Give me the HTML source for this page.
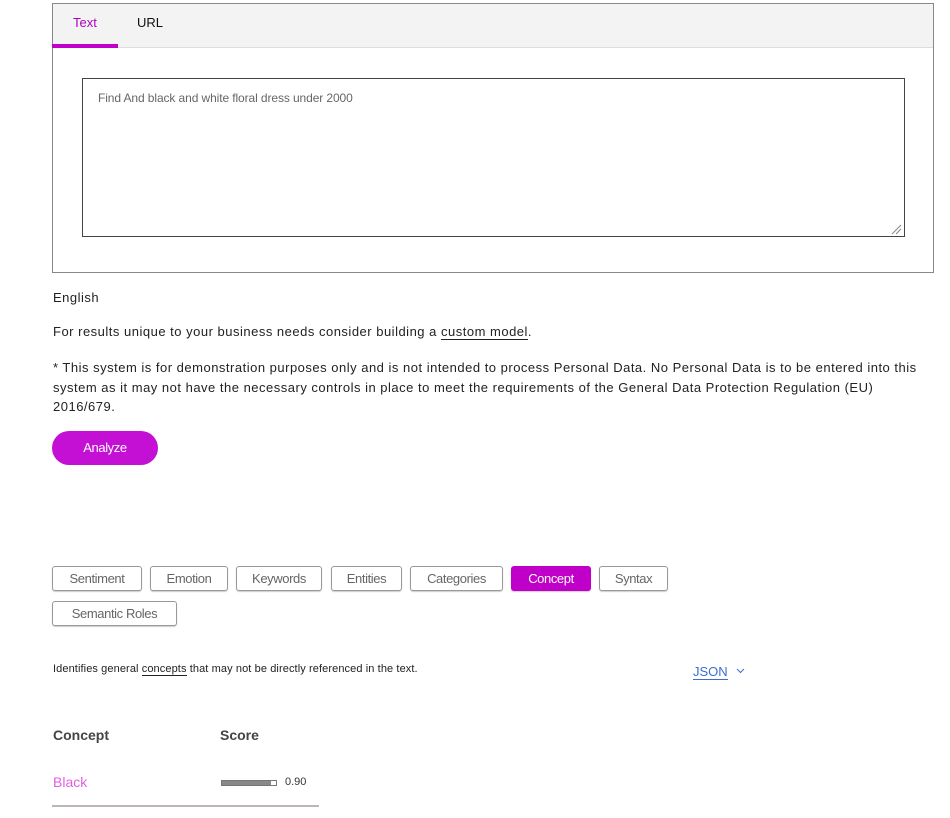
<!DOCTYPE html>
<html><head><style>
*{margin:0;padding:0;box-sizing:border-box}
body{width:950px;height:818px;background:#fff;font-family:"Liberation Sans",sans-serif;color:#222;position:relative;overflow:hidden}
.a{position:absolute;white-space:nowrap}
.btn{position:absolute;top:566px;height:25px;border:1px solid #999;border-radius:3px;font-size:13px;color:#666;text-align:center;line-height:23px;box-shadow:0 1px 1px #ccc;letter-spacing:-0.4px}
.t{letter-spacing:0.5px}
</style></head><body>
<div class="a" style="left:52px;top:3px;width:882px;height:270px;border:1px solid #888"></div>
<div class="a" style="left:53px;top:4px;width:880px;height:44px;background:#f3f3f3;border-bottom:1px solid #ddd"></div>
<div class="a" style="left:52px;top:44px;width:66px;height:4px;background:#c000c8"></div>
<div class="a" style="left:73px;top:15px;font-size:13px;color:#b000c0">Text</div>
<div class="a" style="left:137px;top:15px;font-size:13px;color:#111">URL</div>
<div class="a" style="left:82px;top:78px;width:823px;height:159px;border:1px solid #444"></div>
<div class="a" style="left:98px;top:91px;font-size:12px;color:#666;letter-spacing:-0.1px">Find And black and white floral dress under 2000</div>
<svg class="a" style="left:890px;top:223px" width="12" height="12"><path d="M2 11L11 2M6 11L11 6" stroke="#888" stroke-width="1"/></svg>
<div class="a t" style="left:53px;top:290px;font-size:13px">English</div>
<div class="a t" style="left:53px;top:324px;font-size:13px">For results unique to your business needs consider building a <span style="border-bottom:1px solid #222">custom model</span>.</div>
<div class="a t" style="left:53px;top:358px;font-size:13px;line-height:19.5px">* This system is for demonstration purposes only and is not intended to process Personal Data. No Personal Data is to be entered into this<br>system as it may not have the necessary controls in place to meet the requirements of the General Data Protection Regulation (EU)<br>2016/679.</div>
<div class="a" style="left:52px;top:431px;width:106px;height:34px;border-radius:17px;background:#c410d4;color:#fff;font-size:13px;text-align:center;line-height:34px;letter-spacing:-0.4px">Analyze</div>
<div class="btn" style="left:52px;width:90px">Sentiment</div>
<div class="btn" style="left:150px;width:78px">Emotion</div>
<div class="btn" style="left:236px;width:86px">Keywords</div>
<div class="btn" style="left:331px;width:71px">Entities</div>
<div class="btn" style="left:410px;width:93px">Categories</div>
<div class="btn" style="left:511px;width:80px;background:#c000c8;border-color:#c000c8;color:#fff">Concept</div>
<div class="btn" style="left:599px;width:69px">Syntax</div>
<div class="btn" style="left:52px;top:601px;width:125px">Semantic Roles</div>
<div class="a" style="left:53px;top:663px;font-size:11px;color:#222;letter-spacing:0.1px">Identifies general <span style="border-bottom:1px solid #222">concepts</span> that may not be directly referenced in the text.</div>
<div class="a" style="left:693px;top:664px;font-size:13px;color:#3a6fd0;border-bottom:1px solid #3a6fd0;line-height:15px">JSON</div>
<svg class="a" style="left:736px;top:668px" width="9" height="6"><path d="M1 1L4.5 4.5L8 1" stroke="#3a6fd0" fill="none"/></svg>
<div class="a" style="left:53px;top:727px;font-size:14px;color:#444;font-weight:600">Concept</div>
<div class="a" style="left:220px;top:727px;font-size:14px;color:#444;font-weight:600">Score</div>
<div class="a" style="left:53px;top:774px;font-size:14px;color:#e060e0">Black</div>
<div class="a" style="left:221px;top:780px;width:56px;height:6px;background:#888;border:1px solid #777"></div>
<div class="a" style="left:271px;top:781px;width:5px;height:4px;background:#fff"></div>
<div class="a" style="left:285px;top:776px;font-size:11px;color:#333">0.90</div>
<div class="a" style="left:52px;top:805px;width:267px;height:2px;background:#bdb4bd"></div>
</body></html>
